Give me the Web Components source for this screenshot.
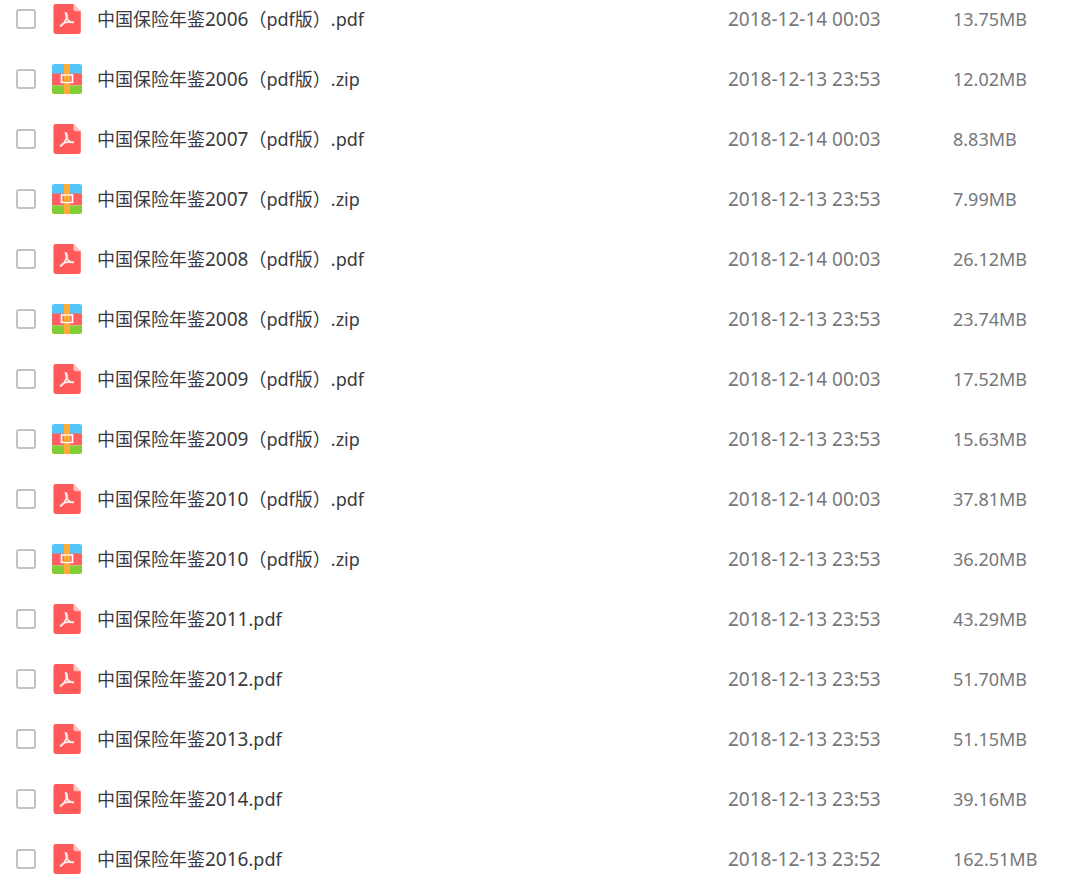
<!DOCTYPE html>
<html lang="zh-CN">
<head>
<meta charset="utf-8">
<meta name="viewport" content="width=device-width, initial-scale=1">
<title>中国保险年鉴</title>
<style>
body { margin: 0; background: #fff; color: #3a3a3e; font-family: "Noto Sans", "Noto Sans CJK SC", sans-serif; font-size: 18px; }
</style>
</head>
<body>
<file-list></file-list>
<script>
class FileIcon extends HTMLElement {
  connectedCallback() {
    const pdf = `<svg viewBox="0 0 30 30" aria-hidden="true">
      <path fill="#ff5959" d="M3.8 0H21.5L28.8 7.2V27.7A2.3 2.3 0 0 1 26.5 30H3.8A2.3 2.3 0 0 1 1.5 27.7V2.3A2.3 2.3 0 0 1 3.8 0Z"/>
      <path fill="#ffc5c5" d="M21.5 0L28.8 7.2H23.5A2 2 0 0 1 21.5 5.2Z"/>
      <g fill="none" stroke="#ffecec" stroke-linecap="round" stroke-linejoin="round">
        <path stroke-width="2.6" d="M14 9.300C14.700 10.800 14.800 12 14.700 13.500"/>
        <path stroke-width="1.900" d="M14.700 13.500C13.700 17.200 11.600 20 8.700 21.900M14.700 13.500C15.800 16.500 18 18.200 21.200 18.500M10.800 19.500C13.800 18 17.600 17.600 21.200 18.300"/>
      </g>
    </svg>`;
    const zip = `<svg viewBox="0 0 30 30" aria-hidden="true">
      <path fill="#55c4f8" d="M2.5 0H27.5A2.5 2.5 0 0 1 30 2.5V10H0V2.5A2.5 2.5 0 0 1 2.5 0Z"/>
      <path fill="#ff5f60" d="M0 9.5H30V21.5H0Z"/>
      <path fill="#80ce36" d="M0 21.5H30V27.5A2.5 2.5 0 0 1 27.5 30H2.5A2.5 2.5 0 0 1 0 27.5Z"/>
      <path fill="#ffac38" d="M12 0H18V30H12Z"/>
      <rect x="9.500" y="11" width="11" height="7.500" fill="#ff7055" stroke="#fff" stroke-width="1.600"/>
      <path fill="#ffac38" d="M12 11.800H18V17.700H12Z"/>
    </svg>`;
    this.attachShadow({ mode: "open" }).innerHTML =
      `<style>:host { display: block; width: 30px; height: 30px; } svg { display: block; width: 100%; height: 100%; }</style>` +
      (this.getAttribute("type") === "pdf" ? pdf : zip);
  }
}

class FileName extends HTMLElement {
  constructor() {
    super();
    this.attachShadow({ mode: "open" }).innerHTML =
      `<style>:host { display: block; white-space: nowrap; overflow: hidden; text-overflow: ellipsis; }
       ::slotted(.year) { font-size: 19px; }</style><slot></slot>`;
  }
}

const files = [
  ["2006", "（pdf版）.pdf", "2018-12-14 00:03", "13.75MB"],
  ["2006", "（pdf版）.zip", "2018-12-13 23:53", "12.02MB"],
  ["2007", "（pdf版）.pdf", "2018-12-14 00:03", "8.83MB"],
  ["2007", "（pdf版）.zip", "2018-12-13 23:53", "7.99MB"],
  ["2008", "（pdf版）.pdf", "2018-12-14 00:03", "26.12MB"],
  ["2008", "（pdf版）.zip", "2018-12-13 23:53", "23.74MB"],
  ["2009", "（pdf版）.pdf", "2018-12-14 00:03", "17.52MB"],
  ["2009", "（pdf版）.zip", "2018-12-13 23:53", "15.63MB"],
  ["2010", "（pdf版）.pdf", "2018-12-14 00:03", "37.81MB"],
  ["2010", "（pdf版）.zip", "2018-12-13 23:53", "36.20MB"],
  ["2011", ".pdf", "2018-12-13 23:53", "43.29MB"],
  ["2012", ".pdf", "2018-12-13 23:53", "51.70MB"],
  ["2013", ".pdf", "2018-12-13 23:53", "51.15MB"],
  ["2014", ".pdf", "2018-12-13 23:53", "39.16MB"],
  ["2016", ".pdf", "2018-12-13 23:52", "162.51MB"]
];

class FileList extends HTMLElement {
  connectedCallback() {
    const rows = files.map(([year, rest, date, size], i) => `<tr>
      <td><input type="checkbox" id="file-${i}"></td>
      <td><file-icon type="${rest.slice(-3)}"></file-icon></td>
      <td><label for="file-${i}"><file-name>中国保险年鉴<span class="year">${year}</span>${rest}</file-name></label></td>
      <td class="date">${date}</td>
      <td class="size">${size}</td>
    </tr>`).join("");
    this.attachShadow({ mode: "open" }).innerHTML = `<style>
      :host { display: block; }
      table { width: 100%; table-layout: fixed; border-collapse: collapse; }
      .c-check { width: 52px; }
      .c-icon { width: 45px; }
      .c-date { width: 225px; }
      .c-size { width: 137px; }
      td { height: 38px; padding: 0 0 22px; line-height: 38px; vertical-align: middle; white-space: nowrap; }
      tr:last-child td { padding-bottom: 0; }
      td:first-child { padding-left: 16px; }
      input { appearance: none; display: block; box-sizing: border-box; width: 20px; height: 20px; margin: 0; border: 2px solid #c2c2c2; border-radius: 3px; background: #fff; }
      input:checked { background: #3b8cff; border-color: #3b8cff; }
      label { display: block; }
      .date, .size { color: #77777b; }
      .date { font-size: 19px; }
    </style>
    <table>
      <colgroup><col class="c-check"><col class="c-icon"><col><col class="c-date"><col class="c-size"></colgroup>
      <tbody>${rows}</tbody>
    </table>`;
  }
}

customElements.define("file-icon", FileIcon);
customElements.define("file-name", FileName);
customElements.define("file-list", FileList);
</script>
</body>
</html>
